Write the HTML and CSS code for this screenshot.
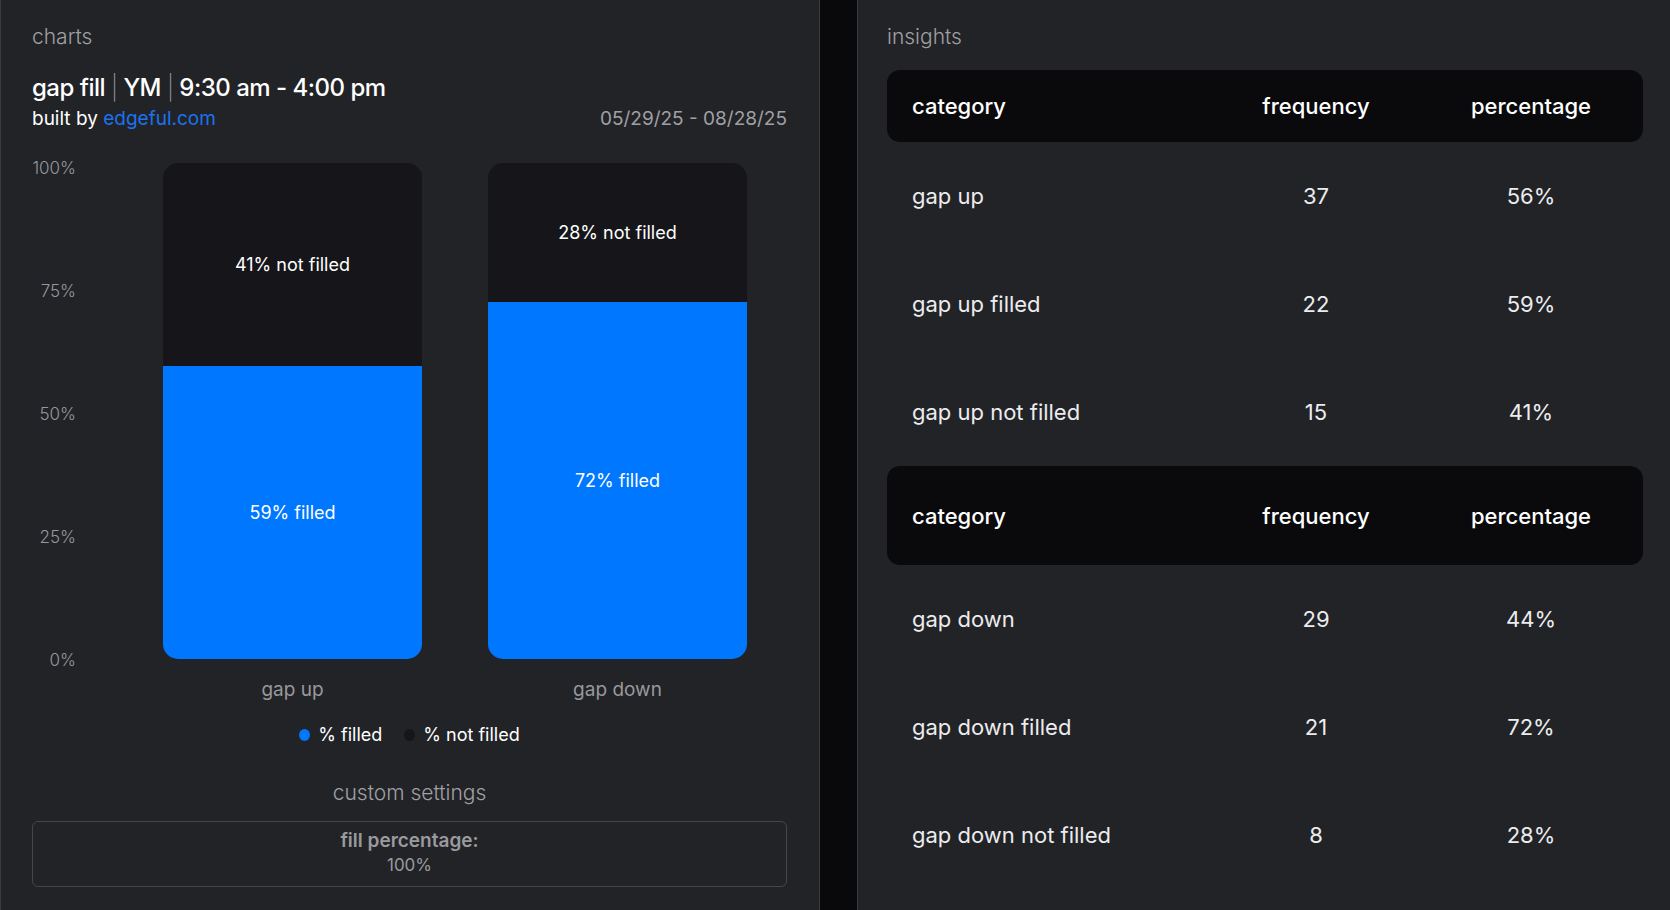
FILE: index.html
```html
<!DOCTYPE html>
<html lang="en">
<head>
    <meta charset="UTF-8">
    <meta name="viewport" content="width=device-width, initial-scale=1.0">
    <title>gap fill | YM</title>
    <link rel="stylesheet" href="styles.css">
</head>
<body>
    <div class="page">
        <!-- left: chart -->
        <div class="panel charts">
            <div class="panel-title">charts</div>
            <div class="report-title">gap fill <span class="sep">|</span> YM <span class="sep">|</span> 9:30 am - 4:00 pm</div>
            <div class="subline">
                <div class="built">built by <a href="#">edgeful.com</a></div>
                <div class="dates">05/29/25 - 08/28/25</div>
            </div>

            <div class="chart">
                <div class="y-axis">
                    <span>100%</span>
                    <span>75%</span>
                    <span>50%</span>
                    <span>25%</span>
                    <span>0%</span>
                </div>
                <div class="band">
                    <div class="bar">
                        <div class="seg not-filled" style="height: 41%;">41% not filled</div>
                        <div class="seg filled" style="height: 59%;">59% filled</div>
                    </div>
                    <div class="x-label">gap up</div>
                </div>
                <div class="band">
                    <div class="bar">
                        <div class="seg not-filled" style="height: 28%;">28% not filled</div>
                        <div class="seg filled" style="height: 72%;">72% filled</div>
                    </div>
                    <div class="x-label">gap down</div>
                </div>
            </div>

            <div class="legend">
                <div class="legend-item"><span class="dot blue"></span>% filled</div>
                <div class="legend-item"><span class="dot dark"></span>% not filled</div>
            </div>

            <div class="settings-title">custom settings</div>
            <div class="settings-box">
                <div class="setting-name">fill percentage:</div>
                <div class="setting-value">100%</div>
            </div>
        </div>

        <div class="gutter"></div>

        <!-- right: insights table -->
        <div class="panel insights">
            <div class="panel-title">insights</div>
            <div class="table">
                <div class="head">
                    <div>category</div>
                    <div class="num">frequency</div>
                    <div class="num">percentage</div>
                </div>
                <div class="row">
                    <div>gap up</div>
                    <div class="num">37</div>
                    <div class="num">56%</div>
                </div>
                <div class="row">
                    <div>gap up filled</div>
                    <div class="num">22</div>
                    <div class="num">59%</div>
                </div>
                <div class="row">
                    <div>gap up not filled</div>
                    <div class="num">15</div>
                    <div class="num">41%</div>
                </div>
                <div class="head tall">
                    <div>category</div>
                    <div class="num">frequency</div>
                    <div class="num">percentage</div>
                </div>
                <div class="row">
                    <div>gap down</div>
                    <div class="num">29</div>
                    <div class="num">44%</div>
                </div>
                <div class="row">
                    <div>gap down filled</div>
                    <div class="num">21</div>
                    <div class="num">72%</div>
                </div>
                <div class="row">
                    <div>gap down not filled</div>
                    <div class="num">8</div>
                    <div class="num">28%</div>
                </div>
            </div>
        </div>
    </div>
</body>
</html>
```
FILE: styles.css
```css
body {
    margin: 0;
    background-color: #09090b;
    font-family: Inter, "Noto Sans", sans-serif;
    color: #f2f2f2;
    overflow: hidden;
}
.page {
    display: flex;
    height: 910px;
}
.panel {
    box-sizing: border-box;
    background-color: #222327;
    border-left: 1px solid #3a3b3f;
    padding: 24px 32px 0 31px;
}
.charts {
    width: 820px;
    border-right: 1px solid #3a3b3f;
    display: flex;
    flex-direction: column;
}
.gutter {
    width: 37px;
}
.insights {
    flex: 1;
    padding: 24px 27px 0 29px;
}
.panel-title {
    font-size: 21px;
    line-height: 26px;
    font-weight: 300;
    color: #a0a0a4;
}
.report-title {
    margin-top: 23px;
    font-size: 24px;
    line-height: 30px;
    font-weight: 500;
    color: #fff;
    letter-spacing: -0.5px;
}
.report-title .sep {
    font-weight: 200;
    color: #9a9a9e;
}
.subline {
    margin-top: 4px;
    display: flex;
    justify-content: space-between;
    align-items: baseline;
}
.built {
    font-size: 19px;
    line-height: 24px;
    color: #fff;
}
.built a {
    color: #1a73f0;
    text-decoration: none;
}
.dates {
    font-size: 19px;
    line-height: 24px;
    color: #a0a0a4;
}

/* chart */
.chart {
    display: flex;
    margin-top: 32px;
    margin-right: 7px;
    height: 538px;
}
.y-axis {
    width: 98px;
    box-sizing: border-box;
    padding-right: 54px;
    height: 512px;
    margin-top: -5px;
    display: flex;
    flex-direction: column;
    justify-content: space-between;
    align-items: flex-end;
    font-size: 17px;
    line-height: 20px;
    font-weight: 300;
    color: #98989c;
}
.band {
    flex: 1;
    display: flex;
    flex-direction: column;
    align-items: center;
}
.bar {
    width: 259px;
    height: 496px;
    border-radius: 15px;
    overflow: hidden;
    display: flex;
    flex-direction: column;
}
.seg {
    display: flex;
    align-items: center;
    justify-content: center;
    font-size: 18px;
    color: #fff;
}
.not-filled {
    background-color: #16161a;
}
.filled {
    background-color: #0077ff;
}
.x-label {
    margin-top: 20px;
    font-size: 19px;
    line-height: 22px;
    color: #98989c;
}

.legend {
    display: flex;
    justify-content: center;
    gap: 22px;
    margin-top: 23px;
    font-size: 18px;
    line-height: 22px;
    color: #fff;
}
.legend-item {
    display: flex;
    align-items: center;
}
.dot {
    width: 11px;
    height: 12px;
    border-radius: 50%;
    margin-right: 8px;
}
.dot.blue {
    background-color: #0077ff;
}
.dot.dark {
    background-color: #16161a;
}

.settings-title {
    margin-top: 34px;
    text-align: center;
    font-size: 21px;
    line-height: 26px;
    font-weight: 300;
    color: #a0a0a4;
}
.settings-box {
    margin-top: 15px;
    border: 1px solid #45464a;
    border-radius: 6px;
    padding: 7px 0 9px;
    text-align: center;
    font-size: 17px;
    line-height: 24px;
    color: #9a9a9e;
}
.setting-name {
    font-size: 19px;
    font-weight: 600;
}

/* insights table */
.table {
    margin-top: 20px;
}
.head, .row {
    display: grid;
    grid-template-columns: 1fr 254px 176px;
    align-items: center;
    padding: 0 24px 0 25px;
    font-size: 22px;
}
.head {
    height: 72px;
    background-color: #0a0a0c;
    border-radius: 13px;
    font-weight: 500;
    color: #fff;
}
.head.tall {
    height: 99px;
}
.row {
    height: 108px;
    color: #ececee;
    font-weight: 400;
}
.num {
    text-align: center;
}
```
